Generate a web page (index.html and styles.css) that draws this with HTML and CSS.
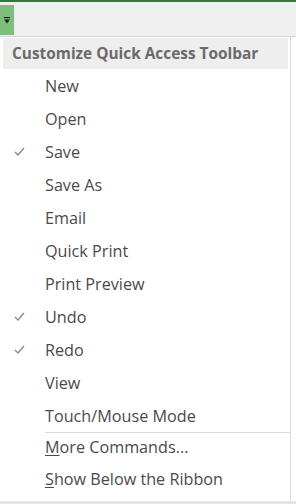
FILE: index.html
```html
<!DOCTYPE html>
<html>
<head>
<meta charset="utf-8">
<link rel="stylesheet" href="styles.css">
</head>
<body>
<div class="topline"></div>
<div class="toolbar">
  <div class="qat-btn">
    <svg width="8" height="9" viewBox="0 0 8 9"><rect x="1" y="1" width="6" height="1.2" fill="#222"/><path d="M1 3.5 H7 L4 7.5 Z" fill="#222"/></svg>
  </div>
</div>
<div class="menu">
  <div class="menu-header">Customize Quick Access Toolbar</div>
  <div class="items">
    <div class="item"><span class="check"></span><span class="label">New</span></div>
    <div class="item"><span class="check"></span><span class="label">Open</span></div>
    <div class="item"><span class="check"><svg width="11" height="9" viewBox="0 0 11 9"><path d="M1 5 L4 8 L10 1" fill="none" stroke="#8a8a8a" stroke-width="1.4"/></svg></span><span class="label">Save</span></div>
    <div class="item"><span class="check"></span><span class="label">Save As</span></div>
    <div class="item"><span class="check"></span><span class="label">Email</span></div>
    <div class="item"><span class="check"></span><span class="label">Quick Print</span></div>
    <div class="item"><span class="check"></span><span class="label">Print Preview</span></div>
    <div class="item"><span class="check"><svg width="11" height="9" viewBox="0 0 11 9"><path d="M1 5 L4 8 L10 1" fill="none" stroke="#8a8a8a" stroke-width="1.4"/></svg></span><span class="label">Undo</span></div>
    <div class="item"><span class="check"><svg width="11" height="9" viewBox="0 0 11 9"><path d="M1 5 L4 8 L10 1" fill="none" stroke="#8a8a8a" stroke-width="1.4"/></svg></span><span class="label">Redo</span></div>
    <div class="item"><span class="check"></span><span class="label">View</span></div>
    <div class="item"><span class="check"></span><span class="label">Touch/Mouse Mode</span></div>
    <div class="sep"></div>
    <div class="item short"><span class="check"></span><span class="label"><u>M</u>ore Commands...</span></div>
    <div class="item short"><span class="check"></span><span class="label"><u>S</u>how Below the Ribbon</span></div>
  </div>
</div>
<div class="bottom"></div>
</body>
</html>
```
FILE: styles.css
```css
html, body {
  margin: 0;
  padding: 0;
  background: #ffffff;
  font-family: "Open Sans", "Noto Sans", sans-serif;
  color: #444444;
}
.topline {
  height: 2px;
  background: #2f7a3e;
}
.toolbar {
  background: #efefef;
  border-bottom: 1px solid #d6d6d6;
  padding-top: 3px;
  box-sizing: border-box;
  height: 35px;
}
.qat-btn {
  width: 14px;
  height: 30px;
  background: #7dbf7a;
  display: flex;
  align-items: center;
  justify-content: center;
}
.menu {
  width: 291px;
  box-sizing: border-box;
  border-right: 1px solid #dcdcdc;
  padding: 1px 0 0 3px;
  height: 464px;
  background: #fff;
}
.menu-header {
  background: #eeeeee;
  height: 31px;
  margin-right: 2px;
  display: flex;
  align-items: center;
  padding-left: 9px;
  font-weight: 700;
  font-size: 15.4px;
  color: #6a6a6a;
}
.item {
  height: 33px;
  display: flex;
  align-items: center;
  font-size: 16.2px;
}
.item.short {
  height: 32px;
}
.check {
  width: 42px;
  box-sizing: border-box;
  padding-left: 11px;
  display: flex;
  align-items: center;
}
.label {
  color: #4a4a4a;
}
.label u {
  text-decoration-thickness: 1px;
  text-underline-offset: 2px;
}
.sep {
  height: 1px;
  background: #dcdcdc;
  margin-left: 42px;
  margin-bottom: -2px;
}
.bottom {
  height: 5px;
  background: #e6e6e6;
}
```
